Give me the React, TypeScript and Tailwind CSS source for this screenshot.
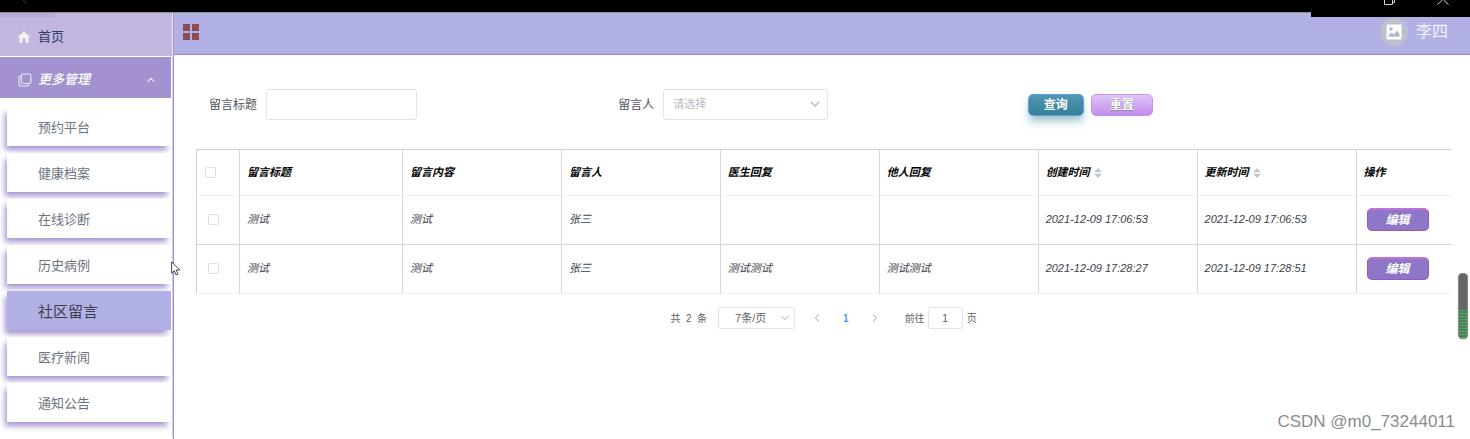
import React from "react";

const menuItems = ["预约平台", "健康档案", "在线诊断", "历史病例", "社区留言", "医疗新闻", "通知公告"];

const rows = [
  { title: "测试", content: "测试", author: "张三", doctor: "", others: "", created: "2021-12-09 17:06:53", updated: "2021-12-09 17:06:53" },
  { title: "测试", content: "测试", author: "张三", doctor: "测试测试", others: "测试测试", created: "2021-12-09 17:28:27", updated: "2021-12-09 17:28:51" },
];

const headers = [
  { text: "留言标题", sortable: false },
  { text: "留言内容", sortable: false },
  { text: "留言人", sortable: false },
  { text: "医生回复", sortable: false },
  { text: "他人回复", sortable: false },
  { text: "创建时间", sortable: true },
  { text: "更新时间", sortable: true },
  { text: "操作", sortable: false },
];

function Chevron({ className, d }: { className: string; d: string }) {
  return (
    <svg viewBox="0 0 10 10" className={className} fill="none" stroke="currentColor" strokeWidth="1.300" strokeLinecap="round" strokeLinejoin="round" aria-hidden="true">
      <path d={d} />
    </svg>
  );
}

const DOWN = "M1 3l4 4 4-4";
const UP = "M1 7l4-4 4 4";
const LEFT = "M7 1L3 5l4 4";
const RIGHT = "M3 1l4 4-4 4";

function TopStrip() {
  return (
    <div className="relative h-[13px] border-b border-[#8f8f8f] bg-black">
      <svg viewBox="0 0 10 4" className="absolute left-[20px] top-0 h-1 w-2.5" fill="none" stroke="#3a3a3a" aria-hidden="true">
        <path d="M3 0l4 3.500" />
      </svg>
      <div className="absolute right-0 top-0 z-10 h-[17px] w-[159px] bg-black">
        <svg viewBox="0 0 14 5" className="absolute left-[72px] top-0 h-[5px] w-[14px]" fill="none" stroke="#d5d5d5" aria-hidden="true">
          <path d="M1.500 0v4.500h8V0M9.500 2.500h2V0" />
        </svg>
        <svg viewBox="0 0 14 5" className="absolute left-[125px] top-0 h-[5px] w-[14px]" fill="none" stroke="#d5d5d5" aria-hidden="true">
          <path d="M1.500 4.500L6.500 0M12.500 4.500L7.500 0" />
        </svg>
      </div>
    </div>
  );
}

function Sidebar() {
  return (
    <nav className="w-[174px] shrink-0 border-r border-[#a48cd0]">
      <div className="relative border-r border-[#eceaf6] bg-[#c2b6df]">
        <div className="absolute left-0 top-0 h-1 w-[55px] bg-[#b8abd8]" />
        <a href="#home" className="flex h-[43px] items-center gap-2 pl-[18px] pt-1 text-[13px] text-[#303a68]">
          <svg viewBox="0 0 12 12" className="size-3" fill="#f1f0ee" aria-hidden="true">
            <path d="M6 .3L.4 5.400v1h1V11a.7.7 0 0 0 .7.7h2.500V8.300a1.400 1.400 0 0 1 2.800 0v3.400h2.500a.7.7 0 0 0 .7-.7V6.400h1v-1z" />
          </svg>
          首页
        </a>
      </div>
      <div className="border-r border-[#d8cff0] pr-px">
        <button type="button" className="mt-px flex h-[41px] w-full items-center bg-[#a492d0] pl-[18px] pr-4 pt-1 text-[13px] font-medium italic text-white">
          <svg viewBox="0 0 14 14" className="mr-[6px] size-[14px]" fill="none" stroke="#e9e4f4" strokeWidth="1.200" aria-hidden="true">
            <rect x="3.300" y="1" width="9.500" height="9.500" rx="1.800" />
            <path d="M3.300 3.300H2.500A1.500 1.500 0 0 0 1 4.800v6.500A1.600 1.600 0 0 0 2.600 13h6.200a1.600 1.600 0 0 0 1.600-1.600v-.9" />
          </svg>
          更多管理
          <Chevron d={UP} className="ml-auto size-2 text-[#eee9f8]" />
        </button>
        <ul className="flex flex-col gap-[7px] pb-4 pl-[7px] pt-[9px]">
          {menuItems.map((item) => (
            <li key={item}>
              <a
                href="#menu"
                className={
                  item === "社区留言"
                    ? "flex h-[39px] items-center bg-[#b1b1e6] pl-[31px] pt-[3px] text-[15px] text-[#3c3c50] shadow-[-3px_5px_6px_-1px_#a492d0]"
                    : "flex h-[39px] items-center bg-white pl-[31px] pt-[3px] text-[13px] text-[#6d7480] shadow-[-3px_5px_6px_-1px_#a492d0]"
                }
              >
                {item}
              </a>
            </li>
          ))}
        </ul>
      </div>
    </nav>
  );
}

function Header() {
  return (
    <header className="flex h-[42px] items-center justify-between border-b border-[#a080cc] bg-[#b1b1e6] pb-[3px] pl-[9px] pr-[22px]">
      <button type="button" aria-label="菜单" className="grid grid-cols-2 gap-[2px]">
        <span className="size-[7px] bg-[#8a4e52]" />
        <span className="size-[7px] bg-[#8a4e52]" />
        <span className="size-[7px] bg-[#8a4e52]" />
        <span className="size-[7px] bg-[#8a4e52]" />
      </button>
      <div className="flex items-center gap-2 text-base text-[#f2f0fa]">
        <span className="flex size-7 items-center justify-center rounded-full bg-[#bcc2cc]">
          <svg viewBox="0 0 16 16" className="size-4" aria-hidden="true">
            <rect x=".5" y=".5" width="15" height="15" rx="1" fill="#fff" />
            <circle cx="5" cy="5" r="1.800" fill="#b4bbc5" />
            <path d="M2.500 12.800V11l3-2.500L8 10.500l3-4 2.500 3.500v2.800z" fill="#b4bbc5" />
          </svg>
        </span>
        李四
      </div>
    </header>
  );
}

function SearchForm() {
  return (
    <form className="grid grid-cols-3 pl-[13px] pr-[14px]" onSubmit={(e) => e.preventDefault()}>
      <div className="flex items-center gap-[9px]">
        <label htmlFor="title" className="text-xs text-[#50545c]">留言标题</label>
        <input id="title" type="text" className="h-[31px] w-[151px] rounded-[3px] border border-[#e0e2e8] px-2 text-[11px] outline-none" />
      </div>
      <div className="flex items-center gap-[9px]">
        <label htmlFor="author" className="text-xs text-[#50545c]">留言人</label>
        <div className="relative">
          <select id="author" className="h-[31px] w-[165px] appearance-none rounded-[3px] border border-[#e0e2e8] bg-white px-[9px] text-[11px] text-[#b8bcc6] outline-none">
            <option>请选择</option>
          </select>
          <Chevron d={DOWN} className="pointer-events-none absolute right-2 top-[10px] size-[10px] text-[#b8bcc6]" />
        </div>
      </div>
      <div className="flex items-center gap-[7px]">
        <button type="submit" className="h-[22px] w-[56px] rounded-[5px] border border-[#5b9ee0] bg-linear-to-b from-[#5098b4] to-[#377f96] text-xs font-bold leading-none text-white shadow-[0_6px_8px_-1px_rgba(55,127,150,0.5)]">
          查询
        </button>
        <button type="reset" className="h-[22px] w-[62px] rounded-[5px] border border-[#c596e6] bg-linear-to-b from-[#dfc5f7] to-[#c28df0] text-xs font-bold leading-none text-white [text-shadow:0_1px_1px_#8d80a0]">
          重置
        </button>
      </div>
    </form>
  );
}

function SortIcon() {
  return (
    <svg viewBox="0 0 8 10" className="ml-1 inline-block h-[10px] w-2" fill="#c0c4cc" aria-hidden="true">
      <path d="M4 0l4 4.200H0zM4 10l4-4.200H0z" />
    </svg>
  );
}

const checkbox = "block size-[11px] appearance-none rounded-[2px] border border-[#dcdfe6] bg-white";

function MessageTable() {
  return (
    <table className="w-full table-fixed border-collapse border-l border-t border-[#cfcfcf] text-left text-[11px] italic">
      <colgroup>
        <col className="w-[43px]" />
        <col className="w-[163px]" />
        <col />
        <col />
        <col />
        <col />
        <col />
        <col />
        <col className="w-[95px]" />
      </colgroup>
      <thead>
        <tr className="h-[46px] border-b border-[#f0f0f8] text-black">
          <th className="pl-2">
            <input type="checkbox" aria-label="全选" className={checkbox} />
          </th>
          {headers.map((h) => (
            <th key={h.text} className="border-l border-[#d8d8d8] pl-[7px] font-bold">
              <span className="inline-flex items-center">
                {h.text}
                {h.sortable && <SortIcon />}
              </span>
            </th>
          ))}
        </tr>
      </thead>
      <tbody>
        {rows.map((r) => (
          <tr key={r.created} className="h-[49px] border-b border-[#d8d4e2] text-[#3c4046] last:border-[#f0f0f8]">
            <td className="pb-px pl-[11px]">
              <input type="checkbox" aria-label={r.created} className={checkbox} />
            </td>
            {[r.title, r.content, r.author, r.doctor, r.others, r.created, r.updated].map((cell, i) => (
              <td key={i} className="border-l border-[#d8d8d8] pb-px pl-[7px]">{cell}</td>
            ))}
            <td className="border-l border-[#d8d8d8] pb-[2px] pl-[10px]">
              <button type="button" className="block h-[23px] w-[62px] rounded-[5px] border border-t-2 border-[#a552c0] border-t-[#c070d8] bg-[#8c78c6] text-xs font-bold italic leading-none text-white">
                编辑
              </button>
            </td>
          </tr>
        ))}
      </tbody>
    </table>
  );
}

function Pagination() {
  return (
    <div className="flex h-[22px] items-center justify-center text-[10px] text-[#606266]">
      <span className="mr-[11px]">共&nbsp; 2 &nbsp;条</span>
      <div className="relative">
        <select aria-label="每页条数" className="block h-[22px] w-[77px] appearance-none rounded-[3px] border border-[#e0e2e8] bg-white pl-4 text-[11px] outline-none">
          <option>7条/页</option>
        </select>
        <Chevron d={DOWN} className="pointer-events-none absolute right-[6px] top-[7px] size-2 text-[#c0c4cc]" />
      </div>
      <button type="button" aria-label="上一页" className="ml-[18px] text-[#b4b8c0]">
        <Chevron d={LEFT} className="size-2" />
      </button>
      <button type="button" className="mx-[22px] font-bold text-[#409eff]">1</button>
      <button type="button" aria-label="下一页" className="text-[#b4b8c0]">
        <Chevron d={RIGHT} className="size-2" />
      </button>
      <label htmlFor="page" className="ml-[26px] mr-[3px]">前往</label>
      <input id="page" type="text" defaultValue="1" className="h-[22px] w-[35px] rounded-[3px] border border-[#e0e2e8] text-center text-[11px] outline-none" />
      <span className="ml-1">页</span>
    </div>
  );
}

export default function App() {
  return (
    <div className="relative flex min-h-screen flex-col bg-white font-['Liberation_Sans','Noto_Sans_CJK_SC',sans-serif]">
      <TopStrip />
      <div className="flex flex-1">
        <Sidebar />
        <div className="flex min-w-0 flex-1 flex-col">
          <Header />
          <main className="flex flex-col pl-[22px] pr-[19px] pt-[34px]">
            <SearchForm />
            <div className="mt-[29px]">
              <MessageTable />
            </div>
            <div className="mt-[13px]">
              <Pagination />
            </div>
          </main>
        </div>
      </div>

      <svg viewBox="0 0 10 15" className="absolute left-[171px] top-[261px] h-[15px] w-[10px]" fill="#fff" stroke="#333" strokeWidth=".9" aria-hidden="true">
        <path d="M.6.800v11.400l2.600-2.500 1.900 4.300 1.900-.8-1.900-4.200h3.700z" />
      </svg>

      <div className="absolute right-[2px] top-[273px] flex h-[66px] w-[10px] flex-col justify-end overflow-hidden rounded-[4px] border border-[#8a8a8a] bg-[#666] shadow-sm">
        <div className="h-[28px] bg-[repeating-linear-gradient(to_bottom,#35b84f_0px,#35b84f_1px,#5d7563_1px,#5d7563_3px)]" />
      </div>

      <div className="absolute bottom-[6px] right-[15px] text-[17px] leading-[22px] text-[#8c8c8c]">CSDN @m0_73244011</div>
    </div>
  );
}
